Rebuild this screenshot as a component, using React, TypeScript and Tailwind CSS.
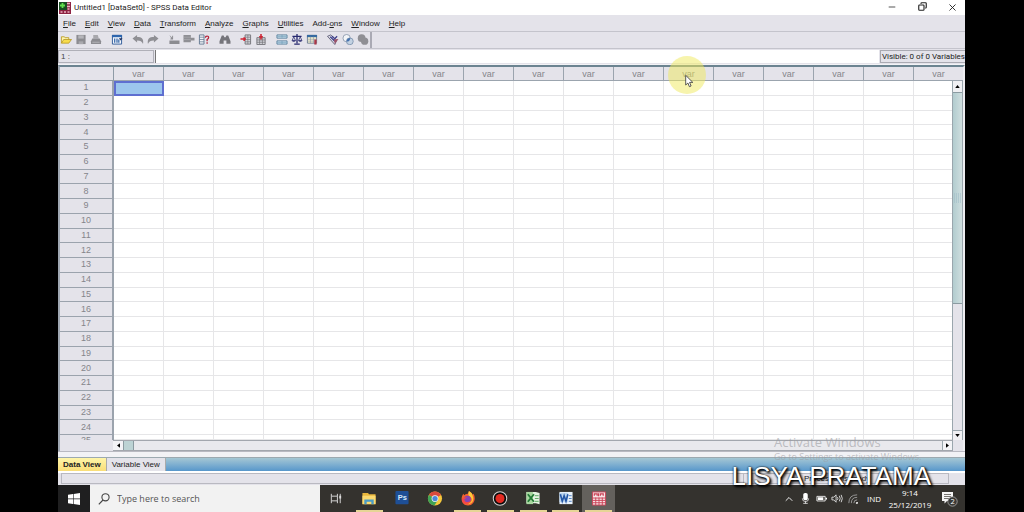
import { ReactNode, useState } from 'react';
import { Minus, X, Copy, ChevronUp } from 'lucide-react';

const MENUS = [
  ['', 'F', 'ile'],
  ['', 'E', 'dit'],
  ['', 'V', 'iew'],
  ['', 'D', 'ata'],
  ['', 'T', 'ransform'],
  ['', 'A', 'nalyze'],
  ['', 'G', 'raphs'],
  ['', 'U', 'tilities'],
  ['Add-', 'o', 'ns'],
  ['', 'W', 'indow'],
  ['', 'H', 'elp'],
];

const ROWS = Array.from({ length: 25 }, (_, i) => i + 1);
const COLUMNS = Array.from({ length: 17 }, (_, i) => i);

// toolbar drawings, all on a 12x12 canvas
const TOOLS: { label: string; art: ReactNode }[][] = [
  [
    {
      label: 'Open File',
      art: (
        <>
          <path d="M1 10V3h3l1 1h4v2" fill="#fdf3b0" stroke="#b99a1c" strokeWidth=".9" />
          <path d="M1 10l2.500-4H12l-3 4z" fill="#f7dc4c" stroke="#b0901a" strokeWidth=".8" />
        </>
      ),
    },
    {
      label: 'Save File',
      art: (
        <>
          <path d="M1 1h10v10H1z" fill="#8c8c91" />
          <path d="M3 1.500h6v3.500H3z" fill="#b5b5ba" />
          <path d="M3.500 8h5v3h-5z" fill="#a9a9ae" />
        </>
      ),
    },
    {
      label: 'Print',
      art: (
        <>
          <path d="M3 1h5l1 4H3z" fill="#a8a8ad" />
          <path d="M2 5h8l1.500 3v3H.5V8z" fill="#8c8c91" />
          <path d="M2 9h8" stroke="#c0c0c5" strokeWidth=".8" />
        </>
      ),
    },
  ],
  [
    {
      label: 'Dialog Recall',
      art: (
        <>
          <path d="M1 1.500h10v9.500H1z" fill="#f3f6fb" stroke="#2a5796" />
          <path d="M.5 1h11v2.500H.5z" fill="#2d65ad" />
          <path d="M3.500 5v4.500M6 5v4.500M8 6v3.500" stroke="#2f62a6" strokeWidth="1.300" />
          <path d="M8 4.500h4l-2 2.500z" fill="#1b2b58" />
        </>
      ),
    },
  ],
  [
    { label: 'Undo', art: <path d="M0 5L5 1v2.300c5 0 7.500 2 6.500 7.700C10.500 8 8.500 7 5 7v2.300z" fill="#8f8f94" /> },
    { label: 'Redo', art: <path d="M12 5L7 1v2.300C2 3.300-.5 5.300.5 11c1-3 3-4 6.500-4v2.300z" fill="#8f8f94" /> },
  ],
  [
    {
      label: 'Go To Case',
      art: <path d="M1 7h11v4H1zM1 1l3 3V2h1v4H2V5h1z" fill="#8c8c91" />,
    },
    {
      label: 'Go To Variable',
      art: (
        <>
          <path d="M0 1h8v8H0zM8 4h4v3H8z" fill="#8f8f94" />
          <path d="M0 3.500h8M0 6h8" stroke="#b2b2b7" strokeWidth=".6" />
        </>
      ),
    },
    {
      label: 'Variables',
      art: (
        <>
          <path d="M1 1h5v10H1z" fill="#eff2f6" stroke="#647892" />
          <path d="M1 3.500h5M1 6h5M1 8.500h5" stroke="#647892" strokeWidth=".8" />
          <path d="M7.500 4q0-1.800 1.800-1.800T11 4q0 1-1.600 2v2M9.400 9v1.600" fill="none" stroke="#b8263d" strokeWidth="1.400" />
        </>
      ),
    },
  ],
  [
    {
      label: 'Find',
      art: <path d="M2.500 1.500h2l.8 2h1.400l.8-2h2L12 8v2.500H7.500V7h-3v3.500H0V8z" fill="#75757b" />,
    },
  ],
  [
    {
      label: 'Insert Cases',
      art: (
        <>
          <path d="M5 1h6v10H5z" fill="#d4d4d9" stroke="#74747a" />
          <path d="M5 3.500h6M5 6h6M5 8.500h6M8 1v10" stroke="#74747a" strokeWidth=".7" />
          <path d="M0 5.500h6M4 3.500v4" stroke="#cf2433" strokeWidth="1.700" />
        </>
      ),
    },
    {
      label: 'Insert Variable',
      art: (
        <>
          <path d="M1.500 4h9v7.500h-9z" fill="#d4d4d9" stroke="#74747a" />
          <path d="M1.500 6.500h9M1.500 9h9M4.500 4v7M7.500 4v7" stroke="#74747a" strokeWidth=".8" />
          <path d="M6 0v6M4 3h4" stroke="#cf2433" strokeWidth="1.700" />
        </>
      ),
    },
  ],
  [
    {
      label: 'Split File',
      art: (
        <>
          <path d="M.5 1h11v3.500H.5zM.5 7.500h11V11H.5z" fill="#cfe6f2" stroke="#587f9c" />
          <path d="M1 2.700h10M1 9.200h10M6 1v3M6 7.500V11" stroke="#6f9ab6" strokeWidth=".7" />
        </>
      ),
    },
    {
      label: 'Weight Cases',
      art: (
        <>
          <path d="M6 0v10M1 2.500h10M3 11h6" stroke="#26286e" strokeWidth="1.400" />
          <path d="M2.500 3L.7 7h3.600zM9.500 3L7.700 7h3.600z" fill="none" stroke="#26286e" strokeWidth=".8" />
          <path d="M0 7h5q-2.500 3-5 0M7 7h5q-2.500 3-5 0" fill="#26286e" />
        </>
      ),
    },
    {
      label: 'Select Cases',
      art: (
        <>
          <path d="M1 1.500h10V10H1z" fill="#f8f3cf" stroke="#6a7c90" />
          <path d="M.5 1h11v2.500H.5z" fill="#356aa1" />
          <path d="M1 5.700h10M1 7.800h10M4.300 3v7M7.600 3v7" stroke="#8c9aaa" strokeWidth=".7" />
          <path d="M8.500 6H11v5.500H8.500z" fill="#a93648" />
        </>
      ),
    },
  ],
  [
    {
      label: 'Value Labels',
      art: (
        <>
          <path d="M0 2.500L3.500 1 10 6.500 8 11.500z" fill="#dcdce6" stroke="#53536e" strokeWidth=".9" />
          <path d="M3 3l5 5M10.500 2.500L7 6M5 2.500l2 2" stroke="#3a3c8a" strokeWidth="1.300" />
          <path d="M7 6l5-.5-4 5.500z" fill="#9c5369" />
        </>
      ),
    },
    {
      label: 'Use Sets',
      art: (
        <>
          <circle cx="4.500" cy="4.500" r="4" fill="#f3f5f8" stroke="#7b8ba0" strokeWidth=".8" />
          <circle cx="8" cy="8" r="3.700" fill="#c3d2e2" stroke="#7088a5" strokeWidth=".8" />
          <path d="M4.500 8.300a4 4 0 0 0 3.900-4A4 4 0 0 0 4.500 8.300" fill="#4471ad" />
        </>
      ),
    },
    {
      label: 'Show All Variables',
      art: (
        <>
          <circle cx="4.500" cy="4.500" r="4.200" fill="#8f8f94" />
          <circle cx="7.800" cy="7.800" r="4" fill="#8f8f94" />
        </>
      ),
    },
  ],
];

// taskbar drawings, all on a 16x16 canvas
const APPS: { label: string; art: ReactNode; open?: boolean; active?: boolean }[] = [
  {
    label: 'Task View',
    art: (
      <g fill="none" stroke="#dcdcdc">
        <path d="M3 3v2.500h6.500V3M3 13v-2.500h6.500V13M3 5.500v5M9.500 5.500v5M12.500 3v10" />
        <path d="M12.500 5v3" strokeWidth="2" />
      </g>
    ),
  },
  {
    label: 'File Explorer',
    open: true,
    art: (
      <>
        <path d="M1 2h6l1 1.500h7V14H1z" fill="#e9b73c" />
        <path d="M1 5h14v9H1z" fill="#fad970" />
        <path d="M3 9h10v5h-2.500v-2.500h-5V14H3z" fill="#4a9cc6" />
      </>
    ),
  },
  {
    label: 'Photoshop',
    art: (
      <>
        <rect x="1" y="0" width="14" height="14" rx="1" fill="#1e4f96" />
        <text x="3.500" y="9.500" fontSize="8" fontFamily="Liberation Sans" fontWeight="700" fill="#d6eafa">Ps</text>
      </>
    ),
  },
  {
    label: 'Chrome',
    art: (
      <>
        <circle cx="8" cy="8" r="7.500" fill="#f5c83c" />
        <path d="M8 8L1.500 4.200A7.500 7.500 0 0 1 14.500 4.300z" fill="#d94a3c" />
        <path d="M8 8L1.500 4.200A7.500 7.500 0 0 0 7.300 15.500L11 9.800z" fill="#3fa355" />
        <circle cx="8" cy="8" r="3.600" fill="#f2f5f5" />
        <circle cx="8" cy="8" r="2.800" fill="#4b87d8" />
      </>
    ),
  },
  {
    label: 'Firefox',
    open: true,
    art: (
      <>
        <path d="M3 3l1 1.500C6 3 7 3 8 3l1-3c3 2 3.500 3 4 4l1-1c3 6 0 12.500-6 12.500S-1 9 3 3" fill="#f2602f" />
        <path d="M9 0c3 2 3.500 3 4 5 2 5-1 9-5 9 5-3 5-6 2-8-2-1-2-3-1-6" fill="#fcc93a" />
        <circle cx="7.500" cy="8.500" r="3.500" fill="#8445b5" />
        <path d="M1.500 8c1 1 3-2 6-1-2 0-2 2-4 2 0 3 4 4 6 2-1 4-8 4-8-3" fill="#f5434c" />
      </>
    ),
  },
  {
    label: 'Recorder',
    open: true,
    art: (
      <>
        <circle cx="8" cy="8" r="7.200" fill="#0b0b0b" stroke="#d5d5d5" strokeWidth="1.100" />
        <circle cx="8" cy="8" r="4.800" fill="#e32b22" />
      </>
    ),
  },
  {
    label: 'Excel',
    open: true,
    art: (
      <>
        <path d="M1 1h10l4 1v12l-4-1H1z" fill="#e3f3e0" />
        <path d="M1 1h7v13H1z" fill="#a8d79f" />
        <path d="M2.500 3.500l6.500 8M9 3.500l-6.500 8" stroke="#257c37" strokeWidth="2" />
        <path d="M10 5h4M10 8h4M10 11h4" stroke="#58a75f" />
      </>
    ),
  },
  {
    label: 'Word',
    open: true,
    art: (
      <>
        <path d="M1 1h14v13H1z" fill="#e9f1fa" />
        <path d="M1 2h9v10H1z" fill="#bdd7f0" />
        <path d="M2 3.500l2 7.500 2-6 2 6 2-7.500" fill="none" stroke="#2356a6" strokeWidth="1.700" />
        <path d="M11 5h3M11 8h3M11 11h3" stroke="#4b7dc0" />
      </>
    ),
  },
  {
    label: 'SPSS',
    open: true,
    active: true,
    art: (
      <>
        <path d="M1 1h14v14H1z" fill="#f7e4e6" stroke="#cb4257" />
        <path d="M1 7.500h14M1 10h14M1 12.500h14M4.500 7v8M8 7v8M11.500 7v8" stroke="#cb4257" />
        <path d="M3 5V3h3v2M7.500 2.500v3M9.500 5V3h3v2" stroke="#cb4257" strokeWidth="1.300" fill="none" />
      </>
    ),
  },
];

function TitleBar() {
  return (
    <header className="flex h-[15px] shrink-0 items-center bg-white pl-px">
      <svg viewBox="0 0 12 12" className="h-[12px] w-[12px]">
        <path d="M0 0h12v12H0z" fill="#8d2343" />
        <path d="M0 0h8v8H0z" fill="#194f22" />
        <path d="M3.500 1v5M1 3.500h5" stroke="#62e04d" strokeWidth="1.800" />
        <path d="M8 1.500h3M8 4.500h3M1.500 10h2M5 10h2M8.500 10h2M8.500 7h2" stroke="#eab4c2" strokeWidth="1.300" />
      </svg>
      <h1 className="ml-[3px] font-[Roboto,sans-serif] text-[8px] leading-none text-[#222]">
        Untitled1 [DataSet0] - SPSS Data Editor
      </h1>
      <div className="ml-auto flex">
        <button aria-label="Minimize" className="flex w-[26px] justify-center text-[#333]"><Minus size={10} strokeWidth={2} /></button>
        <button aria-label="Restore" className="flex w-[34px] justify-center text-[#222]"><Copy size={9} strokeWidth={3} className="-scale-x-100" /></button>
        <button aria-label="Close" className="flex w-[26px] justify-center text-[#222]"><X size={11} strokeWidth={2} /></button>
      </div>
    </header>
  );
}

function MenuBar() {
  return (
    <nav className="flex h-[16px] shrink-0 items-center gap-[9px] pt-px pl-[5px]">
      {MENUS.map(([before, key, after]) => (
        <button key={before + key + after} className="leading-none">
          {before}<u>{key}</u>{after}
        </button>
      ))}
    </nav>
  );
}

function ToolBar() {
  return (
    <div className="flex h-[18px] shrink-0 border-y border-[#c4c4cc]">
      <div className="flex items-center gap-[6px] border-r-2 border-[#aaaab4] pb-px">
        {TOOLS.map((group, i) => (
          <div key={i} className="flex">
            {group.map((tool) => (
              <button key={tool.label} aria-label={tool.label} className="flex w-[15px] justify-center">
                <svg viewBox="0 0 12 12" className="h-[11px] w-[12px]">{tool.art}</svg>
              </button>
            ))}
          </div>
        ))}
      </div>
    </div>
  );
}

function CellEditor() {
  return (
    <div className="flex h-[16px] shrink-0 border-b border-[#f3f3f6] py-px">
      <label htmlFor="cell" className="flex w-[96px] shrink-0 items-center border border-[#b0b0b8] pl-[2px] leading-none text-[#444]">
        1 :
      </label>
      <input id="cell" className="ml-px min-w-0 flex-1 border-l border-[#777] bg-white outline-none" />
      <span className="ml-px flex items-center border border-r-0 border-[#aaaab2] pl-px font-[Roboto,sans-serif] leading-none whitespace-nowrap">
        Visible: 0 of 0 Variables
      </span>
    </div>
  );
}

function DataGrid() {
  return (
    <table className="flex min-h-0 flex-1 flex-col text-[9px] leading-none text-[#85858b]">
      <thead className="block shrink-0">
        <tr className="flex h-[14px]">
          <th aria-label="Case" className="w-[54px] shrink-0 border-r border-b border-[#8e9ba6]" />
          {COLUMNS.map((c) => (
            <th key={c} className="flex w-[50px] shrink-0 items-center justify-center border-r border-b border-[#9ba4ae] pt-px font-normal">
              var
            </th>
          ))}
        </tr>
      </thead>
      {/* the last case is half hidden by the scroll bar */}
      <tbody className="flex min-h-0 flex-1 flex-col">
        {ROWS.map((n) => (
          <tr key={n} className={`flex min-h-0 overflow-hidden ${n === 25 ? 'flex-1' : 'flex-[3]'}`}>
            <th
              className={`flex w-[54px] shrink-0 justify-center border-r-2 border-[#9ba3ad] bg-[#e4e3ea] font-normal ${
                n === 25 ? 'items-start pt-px' : 'items-center border-b'
              }`}
            >
              {n}
            </th>
            {COLUMNS.map((c) => (
              <td
                key={c}
                className={
                  n === 1 && c === 0
                    ? 'w-[50px] shrink-0 border-2 border-[#5e6fd0] bg-[#9cc6ed]'
                    : 'w-[50px] shrink-0 border-r border-b border-[#e6e6e8] bg-white'
                }
              />
            ))}
          </tr>
        ))}
      </tbody>
    </table>
  );
}

function VerticalScroll() {
  return (
    <div className="absolute top-[14px] right-0 bottom-0 flex w-[11px] flex-col border-x border-[#9aa6ad] bg-[#e4e3ea]">
      <button aria-label="Scroll up" className="flex h-[11px] items-center justify-center bg-[#f0f0f3] text-[#111]">
        <svg viewBox="0 0 6 4" className="h-[3px] w-[5px]"><path d="M3 0l3 4H0z" /></svg>
      </button>
      <div className="flex min-h-0 flex-[5] items-center justify-center border-y border-[#8b9ba1] bg-linear-to-r from-[#b2cccf] to-[#cfdedf]">
        <svg viewBox="0 0 8 10" className="w-[8px]">
          <path d="M0 1h8M0 3h8M0 5h8M0 7h8M0 9h8" stroke="#9dbac6" strokeDasharray="1 1" />
        </svg>
      </div>
      <div className="flex-[3]" />
      <button aria-label="Scroll down" className="flex h-[10px] items-center justify-center border-t border-[#9aa6ad] bg-[#f0f0f3]">
        <svg viewBox="0 0 6 4" className="h-[3px] w-[5px]"><path d="M0 0h6L3 4z" /></svg>
      </button>
    </div>
  );
}

function HorizontalScroll() {
  return (
    <div className="flex h-[11px] shrink-0 pr-[10px] pl-[53px]">
      <div className="flex flex-1 border-y border-[#a3a7ae] bg-[#e9e9ed]">
        <button aria-label="Scroll left" className="flex w-[10px] items-center justify-center bg-[#f3f3f6]">
          <svg viewBox="0 0 4 6" className="h-[5px] w-[3px]"><path d="M4 0v6L0 3z" /></svg>
        </button>
        <div className="w-[11px] border-x border-[#8b9ba1] bg-[#bcd3d4]" />
        <button aria-label="Scroll right" className="ml-auto flex w-[11px] items-center justify-center border-x border-[#9aa6ad] bg-[#f3f3f6]">
          <svg viewBox="0 0 4 6" className="h-[5px] w-[3px]"><path d="M0 0v6l4-3z" /></svg>
        </button>
      </div>
    </div>
  );
}

function SheetTabs() {
  const [tab, setTab] = useState('Data View');
  return (
    <div className="flex h-[14px] shrink-0 border-t border-[#9ca9b0] bg-linear-to-b from-[#a5c7d4] to-[#5797cb]">
      {['Data View', 'Variable View'].map((name) => (
        <button
          key={name}
          onClick={() => setTab(name)}
          className={`border-r border-[#aaa] px-[5px] leading-none ${
            tab === name ? 'bg-linear-to-b from-[#fff5a8] to-[#f9de78] font-bold' : 'bg-[#e4e3ea]'
          }`}
        >
          {name}
        </button>
      ))}
    </div>
  );
}

function StatusBar() {
  return (
    <footer className="flex h-[14px] shrink-0 border-t-2 border-white px-[3px] pb-px">
      <div className="flex-1 border border-[#b9b9c1]" />
      <div className="w-[205px] border border-l-0 border-[#b9b9c1] pl-[60px] leading-[9px]">Processor is ready</div>
      <div className="w-[13px]" />
    </footer>
  );
}

function Taskbar() {
  return (
    <div className="flex h-[27px] shrink-0 bg-[#34322e] font-['Open_Sans',sans-serif] text-white">
      <button aria-label="Start" className="flex w-[32px] shrink-0 items-center justify-center bg-[#1f1f20]">
        <svg viewBox="0 0 12 12" className="w-[12px]">
          <path d="M0 1.800l5-.7v4.500H0zM5.600 1L12 0v5.600H5.600zM0 6.300h5v4.600l-5-.7zM5.600 6.300H12V12l-6.400-.9z" fill="#fff" />
        </svg>
      </button>
      <label className="flex w-[230px] shrink-0 items-center gap-[7px] bg-[#f2f2f2] pl-[8px] text-[#444]">
        <svg viewBox="0 0 12 12" className="h-[12px] w-[12px]" fill="none" stroke="#444" strokeWidth="1.100">
          <circle cx="7.500" cy="4.300" r="3.600" />
          <path d="M5 7L.8 11.300" />
        </svg>
        <input
          aria-label="Search"
          placeholder="Type here to search"
          className="w-[180px] text-[9px] outline-none placeholder:text-[#555]"
        />
      </label>
      <div className="flex w-[295px] shrink-0">
        {APPS.map((app) => (
          <button
            key={app.label}
            aria-label={app.label}
            className={`flex flex-1 flex-col items-center pt-[6px] ${app.active ? 'bg-[#64615d]' : ''}`}
          >
            <svg viewBox="0 0 16 16" className="h-[15px] w-[16px]">{app.art}</svg>
            {app.open && <span className="mt-auto h-[2px] w-[27px] bg-[#e6d596]" />}
          </button>
        ))}
      </div>
      <div className="ml-auto flex items-center">
        <div className="flex items-center text-[#eee]">
          <span className="flex w-[16px] justify-center"><ChevronUp size={12} /></span>
          <span className="flex w-[16px] justify-center">
            <svg viewBox="0 0 10 12" className="w-[9px]">
              <rect x="2.500" y="0" width="5" height="8" rx="2" fill="#fff" />
              <path d="M1.500 6q0 3.500 3.500 3.500t3.500-3.500M5 9v2.500M2.500 11.500h5" fill="none" stroke="#ddd" />
            </svg>
          </span>
          <span className="flex w-[16px] justify-center">
            <svg viewBox="0 0 12 8" className="w-[11px]">
              <path d="M1 1.500h9v5H1z" fill="none" stroke="#eee" />
              <path d="M2 2.500h6v3H2zM10.500 3H12v2h-1.500z" fill="#fff" />
            </svg>
          </span>
          <span className="flex w-[16px] justify-center">
            <svg viewBox="0 0 13 12" className="w-[12px]" fill="none" stroke="#ddd">
              <path d="M1 4.500h2L5.500 2v8L3 7.500H1zM7 4.500q1 1.500 0 3M9 3q2 3 0 6M11 2q2.500 4 0 8" />
            </svg>
          </span>
          <span className="flex w-[16px] justify-center">
            <svg viewBox="0 0 12 12" className="w-[10px]" fill="none" stroke="#aaa">
              <path d="M1 11Q1 1 11 1M4 11q0-7 7-7M7 11q0-4 4-4" />
              <path d="M9.500 11h1.500V9.500" stroke="#fff" strokeWidth="1.500" />
            </svg>
          </span>
        </div>
        <span className="ml-[6px] w-[15px] text-[8px]">IND</span>
        <div className="ml-[5px] w-[46px] text-center text-[8px] leading-[12px] whitespace-nowrap">
          <div>9:14</div>
          <div>25/12/2019</div>
        </div>
        <svg viewBox="0 0 17 16" className="mr-[7px] ml-[8px] w-[17px]">
          <path d="M1 1h11v9H6l-2.500 2.500V10H1z" fill="#f4f4f4" />
          <path d="M3 3.500h7M3 5.500h7M3 7.500h5" stroke="#55534f" strokeWidth=".8" />
          <circle cx="11.500" cy="10.500" r="4.700" fill="#3a3937" stroke="#bbb" strokeWidth=".7" />
          <text x="9.500" y="13.300" fontSize="7.500" fontFamily="Open Sans" fill="#fff">2</text>
        </svg>
      </div>
    </div>
  );
}

export default function App() {
  return (
    <div className="relative h-screen overflow-hidden bg-black pr-[59px] pl-[58px] font-['Liberation_Sans',Arial,sans-serif] text-[8px] text-[#222]">
      <div className="flex h-full flex-col bg-[#e4e3ea]">
        <TitleBar />
        <MenuBar />
        <ToolBar />
        <CellEditor />
        <main className="flex min-h-0 flex-1 flex-col border-t-2 border-r-2 border-l-2 border-t-[#6c8491] border-r-[#eeeef2] border-l-[#a0a8b3]">
          <div className="relative flex min-h-0 flex-1 overflow-hidden">
            <DataGrid />
            <VerticalScroll />
          </div>
          <HorizontalScroll />
        </main>
        <div className="h-[6px] shrink-0 border-t border-[#b9b9c1] bg-[#f2f2f5]" />
        <SheetTabs />
        <StatusBar />
        <Taskbar />
      </div>

      {/* mouse highlight and pointer */}
      <div className="absolute top-[56px] left-[668px] h-[38px] w-[38px] rounded-full bg-[#efe95c]/50" />
      <svg viewBox="0 0 9 13" className="absolute top-[74px] left-[685px] h-[14px] w-[9px]">
        <path d="M.7.8v9.700l2.200-2 1.500 3.700 1.700-.7-1.500-3.600h3.200z" fill="#fff" stroke="#333" strokeWidth=".8" />
      </svg>

      <div className="absolute right-[94px] bottom-[48px] w-[156px] font-['Open_Sans',sans-serif] whitespace-nowrap text-[#9b9ba0]/60">
        <p className="text-[13px] leading-[16px]">Activate Windows</p>
        <p className="text-[9px] leading-[14px]">Go to Settings to activate Windows.</p>
      </div>
      <p className="absolute right-[93px] bottom-[22px] text-[26px] leading-[28px] whitespace-nowrap text-white [text-shadow:0_0_2px_#000,1px_1px_2px_#000,2px_2px_3px_#000]">
        LISYA PRATAMA
      </p>
    </div>
  );
}
